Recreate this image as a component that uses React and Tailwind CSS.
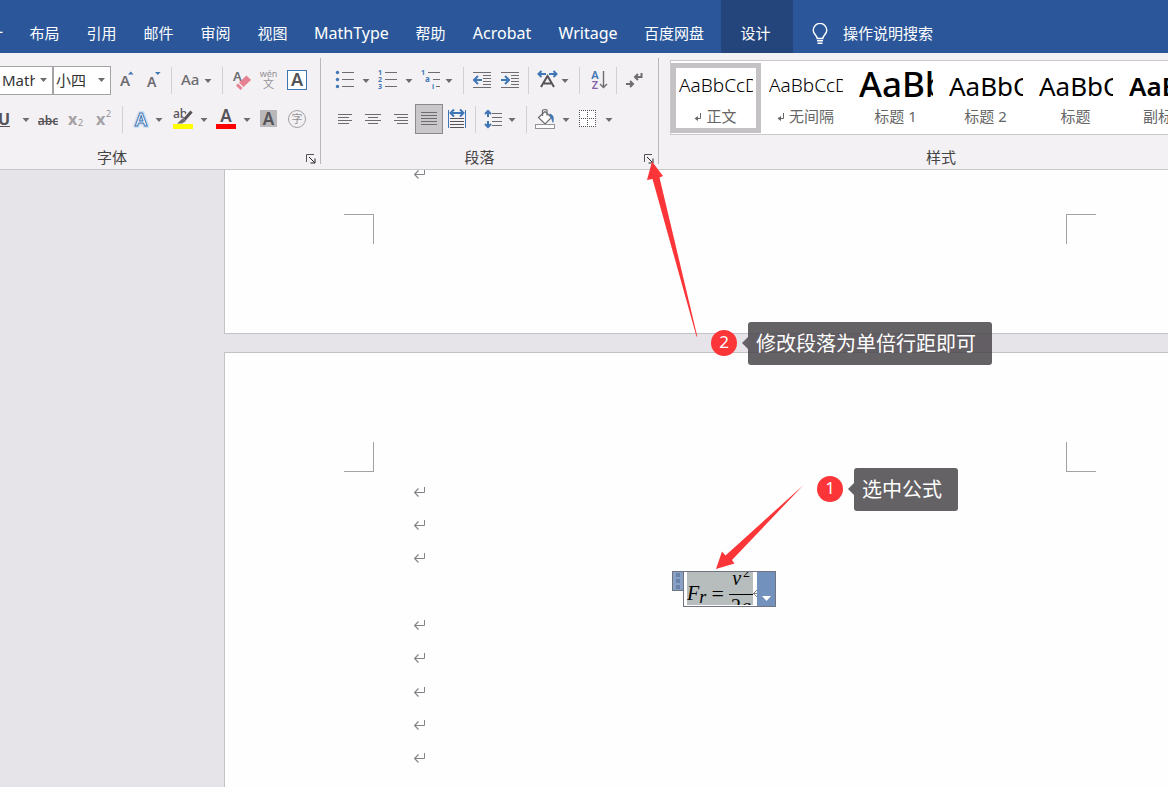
import React from "react";

const BLUE = "#3f76b5";
const GRAY = "#6e6c70";
const DARK = "#555357";
const FONT = '"Noto Sans","Noto Sans CJK SC",sans-serif';

const ROW_TOP = { 1: 65, 2: 104 };

/* Ribbon drawings share one coordinate system: x along the ribbon, y from the window top. */
function Tool({ row, from, to, label, active, children }) {
  return (
    <button
      type="button"
      aria-label={label}
      title={label}
      aria-pressed={active ? true : undefined}
      className={
        active
          ? "shrink-0 bg-[#c9c7ca] outline outline-1 -outline-offset-1 outline-[#8b898c]"
          : "shrink-0 hover:bg-[#dddbdf]"
      }
    >
      <svg
        className="block"
        width={to - from}
        height="30"
        viewBox={`${from} ${ROW_TOP[row]} ${to - from} 30`}
        fontFamily={FONT}
        fill="none"
        aria-hidden="true"
      >
        {children}
      </svg>
    </button>
  );
}

function Gap({ size = "w-[10px]" }) {
  return (
    <span className={`flex h-[27px] shrink-0 justify-center ${size}`}>
      <span className="w-px bg-[#d2d0d4]" />
    </span>
  );
}

function Caret({ x, y = 80 }) {
  return <path d={`M${x - 3.5} ${y - 1}h7l-3.5 4z`} fill={GRAY} />;
}

function Lines({ rows, color = GRAY }) {
  return (
    <g fill={color}>
      {rows.map(([x1, x2, y]) => (
        <rect key={`${x1}-${y}`} x={x1} y={y} width={x2 - x1} height="1" />
      ))}
    </g>
  );
}

function Launcher({ label }) {
  return (
    <button type="button" aria-label={label} title={label} className="flex w-4 shrink-0 items-center justify-center pt-[3px] pr-[2px]">
      <svg width="10" height="10" viewBox="0 0 10 10" fill="none" stroke="#555" aria-hidden="true">
        <path d="M.5 8V.5H8" />
        <path d="M3 3l5.500 5.500M9 4.500V9H4.500" stroke="#222" />
      </svg>
    </button>
  );
}

function Return({ className }) {
  return (
    <svg className={className} width="12" height="12" viewBox="0 0 12 12" fill="none" stroke="#858388" aria-hidden="true">
      <path d="M10.500 1v5.500H1" />
      <path d="M4.500 2.500l-4 4 4 4" strokeWidth="1.200" />
    </svg>
  );
}

function Picker({ label, value, width, inset }) {
  return (
    <label className={`relative flex h-[29px] shrink-0 items-center border border-[#a5a3a6] bg-white ${width}`}>
      <span className="sr-only">{label}</span>
      <select
        defaultValue={value}
        className={`h-full w-full appearance-none overflow-hidden bg-transparent pr-[17px] text-[15px] text-[#333] outline-none ${inset}`}
      >
        <option>{value}</option>
      </select>
      <svg className="pointer-events-none absolute right-[5px]" width="7" height="4" viewBox="0 0 7 4" aria-hidden="true">
        <path d="M0 0h7L3.500 4z" fill={GRAY} />
      </svg>
    </label>
  );
}

const TABS = [
  ["布局", "w-[57px]"],
  ["引用", "w-[57px]"],
  ["邮件", "w-[57px]"],
  ["审阅", "w-[57px]"],
  ["视图", "w-[57px]"],
  ["MathType", "w-[101px] text-[16px]"],
  ["帮助", "w-[57px]"],
  ["Acrobat", "w-[86px] text-[16px]"],
  ["Writage", "w-[86px] text-[16px]"],
  ["百度网盘", "w-[90px] pr-1"],
];

function TabBar() {
  return (
    <nav className="flex h-[53px] bg-[#2b579a] text-[15px] text-white">
      <button type="button" className="flex w-[16px] shrink-0 justify-end overflow-hidden pt-[13px] pr-[13px] whitespace-nowrap">
        <span className="leading-[40px]">设计</span>
      </button>
      {TABS.map(([name, width]) => (
        <button key={name} type="button" className={`shrink-0 pt-[13px] leading-[40px] ${width}`}>
          {name}
        </button>
      ))}
      <button type="button" aria-current="page" className="w-[72px] shrink-0 bg-[#23457c] pt-[13px] pr-[3px] leading-[40px]">
        设计
      </button>
      <button type="button" className="flex shrink-0 items-center gap-[15px] pt-[14px] pl-[19px]">
        <svg width="16" height="22" viewBox="0 0 16 22" fill="none" stroke="white" strokeWidth="1.400" aria-hidden="true">
          <path d="M5.200 15.500c0-3-4-4.200-4-8.300a6.800 6.800 0 0 1 13.600 0c0 4.100-4 5.300-4 8.300z" />
          <path d="M5 17.800h6M5.500 20.300h5" />
        </svg>
        <span>操作说明搜索</span>
      </button>
    </nav>
  );
}

function FontGroup() {
  return (
    <section aria-label="字体" className="flex w-[320px] shrink-0 flex-col">
      <div className="flex h-[30px] items-center">
        <Picker label="字体名称" value="Math" width="w-[53px] border-l-0" inset="pl-[2px]" />
        <Picker label="字号" value="小四" width="w-[58px]" inset="pl-[2px]" />
        <Tool row={1} from={111} to={139} label="增大字号">
          <text x="120" y="86" fontSize="15" fontWeight="600" fill={GRAY}>A</text>
          <path d="M128 74.500l2.800-3 2.800 3z" fill={BLUE} />
        </Tool>
        <Tool row={1} from={139} to={167} label="减小字号">
          <text x="147" y="87" fontSize="14" fontWeight="600" fill={GRAY}>A</text>
          <path d="M155 72l2.800 3 2.800-3z" fill={BLUE} />
        </Tool>
        <Gap size="w-[9px]" />
        <Tool row={1} from={176} to={217} label="更改大小写">
          <text x="181" y="85" fontSize="15" fontWeight="500" fill={GRAY}>Aa</text>
          <Caret x={208} />
        </Tool>
        <Gap />
        <Tool row={1} from={227} to={255} label="清除所有格式">
          <text x="233" y="81" fontSize="13" fontWeight="600" fill={GRAY}>A</text>
          <path d="M239 82.500l7.500-7 4.500 4.500-7.500 7z" fill="#e57f92" />
          <path d="M238 83.500l4.500 4.500-2 2-4.500-4.500z" fill="#e57f92" />
        </Tool>
        <Tool row={1} from={255} to={283} label="拼音指南">
          <text x="268.500" y="77" fontSize="9" textAnchor="middle" fill="#949296">wén</text>
          <text x="268.500" y="88" fontSize="11" textAnchor="middle" fill="#949296">文</text>
        </Tool>
        <Tool row={1} from={283} to={311} label="字符边框">
          <rect x="287.500" y="70.500" width="19" height="19" fill="white" stroke={BLUE} />
          <text x="297" y="86" fontSize="18" fontWeight="600" textAnchor="middle" fill={DARK}>A</text>
        </Tool>
      </div>

      <div className="mt-[9px] flex h-[30px] items-center">
        <Tool row={2} from={0} to={33} label="下划线">
          <text x="-2" y="125" fontSize="16" fontWeight="700" fill={DARK}>U</text>
          <rect x="0" y="126" width="10" height="1" fill={DARK} />
          <Caret x={26} y={119} />
        </Tool>
        <Tool row={2} from={33} to={62} label="删除线">
          <text x="48" y="125" fontSize="12" fontWeight="600" textAnchor="middle" fill={DARK}>abc</text>
          <rect x="38" y="121" width="20" height="1" fill={DARK} />
        </Tool>
        <Tool row={2} from={62} to={90} label="下标">
          <text x="68" y="125" fontSize="16" fontWeight="700" fill="#a3a1a5">x</text>
          <text x="78" y="126" fontSize="9" fill="#949296">2</text>
        </Tool>
        <Tool row={2} from={90} to={117} label="上标">
          <text x="96" y="125" fontSize="16" fontWeight="700" fill="#a3a1a5">x</text>
          <text x="106" y="117" fontSize="9" fill="#949296">2</text>
        </Tool>
        <Gap />
        <Tool row={2} from={127} to={167} label="文本效果和版式">
          <text x="141" y="126" fontSize="18" fontWeight="600" textAnchor="middle" fill="white" stroke="#cfe0f3" strokeWidth="4" strokeLinejoin="round" paintOrder="stroke">A</text>
          <text x="141" y="126" fontSize="18" fontWeight="600" textAnchor="middle" fill="white" stroke={BLUE} strokeWidth="1">A</text>
          <Caret x={159} y={119} />
        </Tool>
        <Tool row={2} from={167} to={211} label="文本突出显示颜色">
          <text x="173" y="118" fontSize="12" fontWeight="500" fill={DARK}>ab</text>
          <path d="M192 110.500l-7 8" stroke="#f3f1f4" strokeWidth="5" />
          <path d="M191.500 111.500l-7 8" stroke={DARK} strokeWidth="3" />
          <path d="M183 118l3 3-4 2.500h-5z" fill={GRAY} />
          <rect x="173" y="124" width="20" height="5" fill="#ffff00" />
          <Caret x={204} y={119} />
        </Tool>
        <Tool row={2} from={211} to={254} label="字体颜色">
          <text x="226" y="122" fontSize="17" fontWeight="600" textAnchor="middle" fill={DARK}>A</text>
          <rect x="216" y="124" width="20" height="5" fill="#ff0000" />
          <Caret x={247} y={119} />
        </Tool>
        <Tool row={2} from={254} to={283} label="字符底纹">
          <rect x="260" y="110" width="17" height="17" fill="#b9b7ba" />
          <text x="268.500" y="125" fontSize="17" fontWeight="600" textAnchor="middle" fill={DARK}>A</text>
        </Tool>
        <Tool row={2} from={283} to={311} label="带圈字符">
          <circle cx="297" cy="119" r="8.500" stroke="#a3a1a5" />
          <text x="297" y="123" fontSize="11" textAnchor="middle" fill="#949296">字</text>
        </Tool>
      </div>

      <div className="mt-[13px] flex h-[20px]">
        <h2 className="flex-1 pr-20 text-center text-[15px] leading-[20px] text-[#444]">字体</h2>
        <Launcher label="字体设置" />
      </div>
    </section>
  );
}

function ParagraphGroup() {
  return (
    <section aria-label="段落" className="flex w-[337px] shrink-0 flex-col">
      <div className="flex h-[30px] items-center pl-[10px]">
        <Tool row={1} from={331} to={371} label="项目符号">
          <circle cx="337.500" cy="72.500" r="1.700" fill={BLUE} />
          <circle cx="337.500" cy="79.500" r="1.700" fill={BLUE} />
          <circle cx="337.500" cy="86.500" r="1.700" fill={BLUE} />
          <Lines rows={[[342, 354, 72], [342, 354, 79], [342, 354, 86]]} />
          <Caret x={366} />
        </Tool>
        <Tool row={1} from={371} to={415} label="编号">
          <g fontSize="7" fontWeight="700" fill={BLUE}>
            <text x="378" y="75">1</text>
            <text x="378" y="82">2</text>
            <text x="378" y="89">3</text>
          </g>
          <Lines rows={[[385, 397, 72], [385, 397, 79], [385, 397, 86]]} />
          <Caret x={409} />
        </Tool>
        <Tool row={1} from={415} to={458} label="多级列表">
          <g fontSize="7" fontWeight="700" fill={BLUE}>
            <text x="421" y="75">1</text>
            <text x="425" y="82" fontSize="8">a</text>
            <text x="432" y="89">i</text>
          </g>
          <Lines rows={[[428, 440, 72], [433, 440, 79], [436, 440, 86]]} />
          <Caret x={449} />
        </Tool>
        <Gap />
        <Tool row={1} from={468} to={496} label="减少缩进量">
          <Lines rows={[[473, 491, 72], [483, 491, 75], [483, 491, 78], [483, 491, 81], [483, 491, 84], [473, 491, 87]]} />
          <path d="M482 80h-7M478 76l-4 4 4 4" stroke={BLUE} strokeWidth="2" />
        </Tool>
        <Tool row={1} from={496} to={523} label="增加缩进量">
          <Lines rows={[[501, 519, 72], [511, 519, 75], [511, 519, 78], [511, 519, 81], [511, 519, 84], [501, 519, 87]]} />
          <path d="M501 80h7M505 76l4 4-4 4" stroke={BLUE} strokeWidth="2" />
        </Tool>
        <Gap />
        <Tool row={1} from={533} to={574} label="中文版式">
          <path d="M546 74h-7M541.500 71l-3 3 3 3M549 74h7M553.500 71l3 3-3 3" stroke={BLUE} strokeWidth="2" />
          <path d="M541 87l6.500-11 6.500 11M544 83.500h7" stroke={DARK} strokeWidth="2" />
          <Caret x={565} />
        </Tool>
        <Gap />
        <Tool row={1} from={584} to={611} label="排序">
          <text x="595" y="79" fontSize="11" fontWeight="600" textAnchor="middle" fill={BLUE}>A</text>
          <text x="595" y="89" fontSize="11" fontWeight="600" textAnchor="middle" fill="#8661a8">Z</text>
          <path d="M603.500 71v16M600 84l3.500 3.500 3.500-3.500" stroke={GRAY} strokeWidth="1.400" />
        </Tool>
        <Gap />
        <Tool row={1} from={621} to={650} label="显示编辑标记">
          <path d="M641.500 73v4h-6M638 74l-3 3 3 3M626 84h7M630 81l3 3-3 3" stroke={GRAY} strokeWidth="2" />
        </Tool>
      </div>

      <div className="mt-[9px] flex h-[30px] items-center pl-[10px]">
        <Tool row={2} from={331} to={359} label="左对齐">
          <Lines rows={[[338, 352, 114], [338, 349, 117], [338, 352, 120], [338, 349, 123]]} />
        </Tool>
        <Tool row={2} from={359} to={387} label="居中">
          <Lines rows={[[365, 381, 114], [368, 378, 117], [365, 381, 120], [368, 378, 123]]} />
        </Tool>
        <Tool row={2} from={387} to={415} label="右对齐">
          <Lines rows={[[394, 408, 114], [397, 408, 117], [394, 408, 120], [397, 408, 123]]} />
        </Tool>
        <Tool row={2} from={415} to={443} label="两端对齐" active>
          <Lines rows={[[421, 437, 112], [421, 437, 115], [421, 437, 118], [421, 437, 121], [421, 437, 124]]} />
        </Tool>
        <Tool row={2} from={443} to={470} label="分散对齐">
          <path d="M448.500 110v18M465.500 110v18" stroke={BLUE} />
          <path d="M451 113h12M454 109.500l-3.500 3.500 3.500 3.500M460 109.500l3.500 3.500-3.500 3.500" stroke={BLUE} strokeWidth="2" />
          <Lines color={DARK} rows={[[450, 464, 118], [450, 464, 121], [450, 464, 124], [450, 464, 127]]} />
        </Tool>
        <Gap />
        <Tool row={2} from={480} to={521} label="行和段落间距">
          <path d="M488 111v6M488 121v6M485 114l3-3 3 3M485 124l3 3 3-3" stroke={BLUE} strokeWidth="2" />
          <Lines rows={[[492, 502, 113], [492, 502, 117], [492, 502, 121], [492, 502, 125]]} />
          <Caret x={512} y={119} />
        </Tool>
        <Gap />
        <Tool row={2} from={531} to={573} label="底纹">
          <path d="M538.500 117.500l6.500-6 6.500 6-6.500 6.500z" fill="white" stroke={GRAY} strokeWidth="1.200" />
          <path d="M542.500 116v-5.500q0-1 2.500-1t2 1v5" stroke={GRAY} strokeWidth="1.200" />
          <path d="M549.500 114c4 .5 4.500 4 3.500 8.500-1-2.500-1-3.500-2-4.500z" fill={BLUE} stroke={BLUE} strokeWidth=".6" />
          <rect x="535.500" y="124.500" width="19" height="4" fill="white" stroke="#949296" />
          <Caret x={566} y={119} />
        </Tool>
        <Tool row={2} from={573} to={617} label="边框">
          <rect x="579" y="110" width="17" height="17" fill="white" />
          <path d="M579 110.500h18M579 118.500h18M579 126.500h18M579.500 110v17M587.500 110v17M595.500 110v17" stroke={DARK} strokeDasharray="1 1" />
          <Caret x={609} y={119} />
        </Tool>
      </div>

      <div className="mt-[13px] flex h-[20px]">
        <h2 className="flex-1 pr-1 text-center text-[15px] leading-[20px] text-[#444]">段落</h2>
        <Launcher label="段落设置" />
      </div>
    </section>
  );
}

const STYLES = [
  { name: "正文", sample: "AaBbCcD", look: "text-[19px] font-light", mark: true, selected: true },
  { name: "无间隔", sample: "AaBbCcD", look: "text-[19px] font-light", mark: true },
  { name: "标题 1", sample: "AaBb", look: "text-[35px] font-medium pb-1" },
  { name: "标题 2", sample: "AaBbC", look: "text-[26px]" },
  { name: "标题", sample: "AaBbC", look: "text-[26px]" },
  { name: "副标题", sample: "AaBbC", look: "text-[26px] font-semibold" },
];

function StylesGroup() {
  return (
    <section aria-label="样式" className="-mt-[5px] flex min-w-0 flex-1 flex-col overflow-hidden pl-[11px]">
      <div className="flex h-[75px] items-center overflow-hidden border border-r-0 border-[#cac8cc] bg-white">
        {STYLES.map((s) => (
          <button
            key={s.name}
            type="button"
            aria-pressed={Boolean(s.selected)}
            className={`flex h-[70px] w-[90px] shrink-0 flex-col items-center border-[5px] ${
              s.selected ? "border-[#c4c2c5]" : "border-transparent"
            }`}
          >
            <span className={`flex h-[36px] w-[74px] items-center overflow-hidden leading-none whitespace-nowrap text-black ${s.look}`}>
              {s.sample}
            </span>
            <span className="mt-[2px] flex h-[20px] items-center gap-1 pr-px text-[15px] leading-[20px] whitespace-nowrap text-[#666]">
              {s.mark && (
                <svg className="mt-1" width="8" height="9" viewBox="0 0 8 9" fill="none" stroke="#666" aria-hidden="true">
                  <path d="M6.500 0v5.500H2" />
                  <path d="M4 3v5L.5 5.500z" fill="#666" stroke="none" />
                </svg>
              )}
              {s.name}
            </span>
          </button>
        ))}
      </div>
      <h2 className="mt-[12px] pl-[44px] text-center text-[15px] leading-[20px] text-[#444]">样式</h2>
    </section>
  );
}

function Divider() {
  return <span className="-mt-[7px] h-[106px] w-px shrink-0 bg-[#b9b7ba]" />;
}

function CropMarks({ edge }) {
  return (
    <div className="flex justify-between">
      <span className={`h-[30px] w-[30px] border-r border-[#a3a1a5] ${edge}`} />
      <span className={`h-[30px] w-[30px] border-l border-[#a3a1a5] ${edge}`} />
    </div>
  );
}

function Equation() {
  return (
    <div className="flex h-[36px] w-[104px] shrink-0 items-start">
      <span className="flex h-[20px] w-[11px] shrink-0 flex-col items-center justify-center gap-[2px] border border-r-0 border-[#6f7480] bg-[#8aa1c6]">
        <span className="h-1 w-1 bg-[#6b83aa]" />
        <span className="h-1 w-1 bg-[#6b83aa]" />
        <span className="h-1 w-1 bg-[#6b83aa]" />
      </span>
      <div className="flex h-[36px] flex-1 border border-[#6f7480] bg-white pl-[3px] font-['Liberation_Serif',serif] text-[20px] text-black">
        <div role="math" aria-label="F_r = v² / 2g" className="flex h-[33px] w-[66px] shrink-0 items-start overflow-hidden bg-[#b7bdbd]">
          <span className="pt-[10px] leading-[22px] italic">F</span>
          <span className="pt-[14px] text-[18px] leading-[22px] italic">r</span>
          <span className="w-[23px] pt-[11px] text-center text-[22px] leading-[22px]">=</span>
          <span className="flex flex-1 flex-col">
            <span className="flex h-[23px] justify-center gap-[2px] border-b border-black leading-[12px]">
              <i>v</i>
              <span className="text-[14px] leading-[2px]">2</span>
            </span>
            <span className="text-center leading-[22px]">
              2<i>g</i>
            </span>
          </span>
        </div>
        <svg className="shrink-0" width="4" height="34" viewBox="0 0 4 34" fill="none" stroke="#858388" aria-hidden="true">
          <path d="M4 18l-3.500 3.500L4 25M0 21.500h4" />
        </svg>
        <button type="button" aria-label="公式选项" className="flex flex-1 items-end justify-center bg-[#7391bd] pb-[5px]">
          <svg width="9" height="5" viewBox="0 0 9 5" aria-hidden="true">
            <path d="M0 0h9L4.500 5z" fill="white" />
          </svg>
        </button>
      </div>
    </div>
  );
}

const PARAGRAPHS = ["mark", "mark", "mark", "equation", "mark", "mark", "mark", "mark", "mark"];

function Document() {
  return (
    <main className="min-w-0 flex-1 overflow-hidden bg-[#e6e4e8] pl-[224px]">
      <article className="h-[164px] w-[992px] border-x border-b border-[#c4c2c6] bg-[#fefefe] px-[119px]">
        <div className="flex h-[10px] items-end overflow-hidden pl-[70px]">
          <Return className="shrink-0" />
        </div>
        <div className="mt-[34px]">
          <CropMarks edge="border-t" />
        </div>
      </article>
      <article className="mt-[18px] w-[992px] border-x border-t border-[#c4c2c6] bg-[#fefefe] px-[119px] pt-[89px] pb-7">
        <CropMarks edge="border-b" />
        <div className="mt-[3px] grid h-[300px] auto-rows-[minmax(0,1fr)] px-[30px]">
          {PARAGRAPHS.map((kind, i) =>
            kind === "equation" ? (
              <div key={i} className="flex items-end justify-center pb-px pl-2">
                <Equation />
              </div>
            ) : (
              <p key={i} className="flex items-center pl-10">
                <Return />
              </p>
            )
          )}
        </div>
      </article>
    </main>
  );
}

function Note({ number, text, place }) {
  return (
    <div className={`absolute flex items-start ${place}`}>
      <span className="mt-2 flex h-[26px] w-[26px] items-center justify-center rounded-full bg-[#fb3538] pb-[3px] text-[17px] leading-none text-white">
        {number}
      </span>
      <svg className="mt-[15px] ml-[5px]" width="6" height="12" viewBox="0 0 6 12" aria-hidden="true">
        <path d="M6 0v12L0 6z" fill="#656265" />
      </svg>
      <span className="h-[43px] rounded-[3px] bg-[#4a474b]/85 pr-4 pl-2 text-[20px] leading-[44px] whitespace-nowrap text-white">
        {text}
      </span>
    </div>
  );
}

export default function App() {
  return (
    <div className="relative flex min-h-screen flex-col overflow-hidden font-['Noto_Sans','Noto_Sans_CJK_SC',sans-serif]">
      <TabBar />
      <header className="flex h-[117px] border-b border-[#c9c7cb] bg-[#f3f1f4] pt-[12px]">
        <FontGroup />
        <Divider />
        <ParagraphGroup />
        <Divider />
        <StylesGroup />
      </header>
      <Document />

      <svg className="pointer-events-none absolute top-[160px] left-[640px]" width="60" height="180" viewBox="640 160 60 180" aria-hidden="true">
        <path d="M652 161.500L663 176l-3.500 1.500L697.300 336.500h-.8L652.500 179l-5.500 1z" fill="#fb3538" />
      </svg>
      <svg className="pointer-events-none absolute top-[480px] left-[710px]" width="100" height="95" viewBox="710 480 100 95" aria-hidden="true">
        <path d="M716 569l6-17.500 3.500 4L803.500 485 732 560l2.500 3.500z" fill="#fb3538" />
      </svg>
      <Note number="2" text="修改段落为单倍行距即可" place="top-[322px] left-[711px]" />
      <Note number="1" text="选中公式" place="top-[468px] left-[817px]" />
    </div>
  );
}
